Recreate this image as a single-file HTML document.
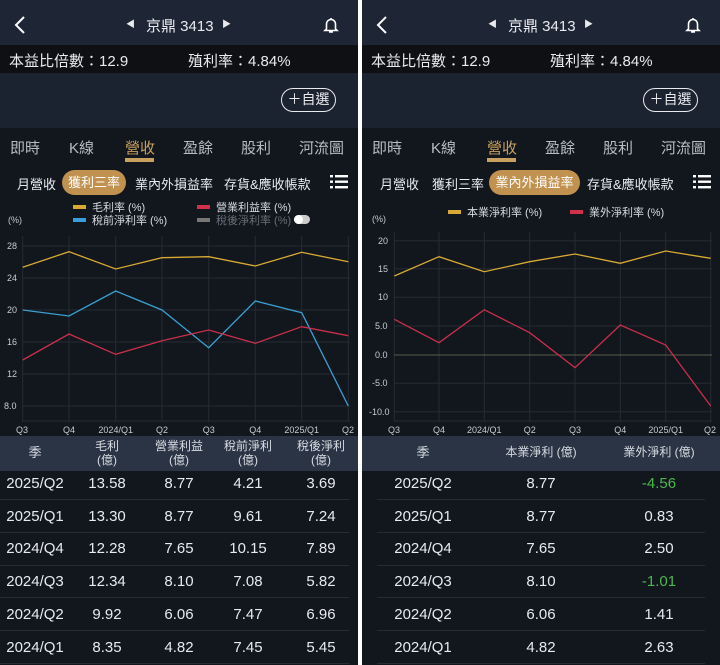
<!DOCTYPE html>
<html><head><meta charset="utf-8"><style>
*{margin:0;padding:0;box-sizing:border-box}
body{width:720px;height:665px;background:#fff;font-family:"Liberation Sans","Noto Sans CJK TC",sans-serif;color:#e8eaee;overflow:hidden;position:relative}
.p{position:absolute;top:0;width:358px;height:665px;background:#12161d;overflow:hidden}
.a{position:absolute;white-space:nowrap}
.hd{position:absolute;left:0;top:0;width:358px;height:45px;background:#1e2636}
.ib{position:absolute;left:0;top:45px;width:358px;height:28px;background:#0e1013}
.fav{position:absolute;left:0;top:73px;width:358px;height:55px;background:#1b2230}
.btn{position:absolute;left:281px;top:88px;width:55px;height:24px;border:1.3px solid #e8eaee;border-radius:12px;font-size:14px;text-align:center;line-height:21px}
.tab{font-size:15px;top:137px;color:#b8bcc4}
.sub{font-size:13px;top:174px;color:#e8eaee}
.pill{position:absolute;top:170px;height:25px;background:#c0914f;border-radius:13px;font-size:13px;color:#fff;text-align:center;line-height:25px;white-space:nowrap}
.leg{font-size:11px;color:#d8dce2}
.sw{position:absolute;width:13px;height:4px}
.th{position:absolute;left:0;top:436px;width:358px;height:35px;background:#2a3445}
.thc{font-size:12px;color:#d8dce2;text-align:center;line-height:14px;position:absolute;transform:translateX(-50%);white-space:nowrap}
.td{font-size:15px;position:absolute;transform:translateX(-50%);white-space:nowrap}
.sep{position:absolute;height:1px;background:#262c36}
</style></head><body>

<!-- LEFT PANEL -->
<div class="p" style="left:0">
<div class="hd"></div>
<svg class="a" style="left:12px;top:15px" width="16" height="20"><path d="M12 2L4 10L12 18" stroke="#fff" stroke-width="2" fill="none"/></svg>
<div class="a" style="left:126px;top:17px;font-size:9px">◀</div>
<div class="a" style="left:146px;top:15px;font-size:15px">京鼎 3413</div>
<div class="a" style="left:222px;top:17px;font-size:9px">▶</div>
<svg class="a" style="left:323px;top:16px" width="16" height="18"><path d="M8 2v1M3.5 13V8a4.5 4.5 0 0 1 9 0v5l1.5 1.5h-12z M6 16h4" stroke="#fff" stroke-width="1.6" fill="none"/></svg>
<div class="ib"></div>
<div class="a" style="left:9px;top:50px;font-size:15px">本益比倍數：12.9</div>
<div class="a" style="left:188px;top:50px;font-size:15px">殖利率：4.84%</div>
<div class="fav"></div>
<div class="btn">＋自選</div>
<div class="a tab" style="left:10px">即時</div>
<div class="a tab" style="left:69px">K線</div>
<div class="a tab" style="left:125px;color:#c8a060">營收</div>
<div class="a" style="left:125px;top:158px;width:29px;height:4px;background:#c8a060"></div>
<div class="a tab" style="left:183px">盈餘</div>
<div class="a tab" style="left:241px">股利</div>
<div class="a tab" style="left:299px">河流圖</div>
<div class="a sub" style="left:17px">月營收</div>
<div class="pill" style="left:62px;width:64px">獲利三率</div>
<div class="a sub" style="left:135px">業內外損益率</div>
<div class="a sub" style="left:224px">存貨&amp;應收帳款</div>
<svg class="a" style="left:330px;top:175px" width="18" height="14"><g fill="#fff"><rect x="0" y="0" width="3" height="2.4"/><rect x="5" y="0" width="13" height="2.4"/><rect x="0" y="5.5" width="3" height="2.4"/><rect x="5" y="5.5" width="13" height="2.4"/><rect x="0" y="11" width="3" height="2.4"/><rect x="5" y="11" width="13" height="2.4"/></g></svg>
<div class="sw" style="left:73px;top:205px;background:#d8aa35"></div><div class="a leg" style="left:92px;top:199px">毛利率 (%)</div>
<div class="sw" style="left:197px;top:205px;background:#d0304a"></div><div class="a leg" style="left:216px;top:199px">營業利益率 (%)</div>
<div class="sw" style="left:73px;top:218px;background:#3a9fd8"></div><div class="a leg" style="left:92px;top:212px">稅前淨利率 (%)</div>
<div class="sw" style="left:197px;top:218px;background:#777"></div><div class="a leg" style="left:216px;top:212px;color:#6a6e76">稅後淨利率 (%)</div>
<div class="a" style="left:294px;top:215px;width:16px;height:9px;border-radius:5px;background:#ccc"></div><div class="a" style="left:294px;top:215px;width:9px;height:9px;border-radius:5px;background:#fff"></div>
<div class="a" style="left:8px;top:215px;font-size:9px;color:#c8ccd2">(%)</div>
<svg class="a" style="left:0;top:0" width="358" height="440">
<g stroke="#262b33" stroke-width="1">
<line x1="22.7" y1="236" x2="22.7" y2="422"/><line x1="69" y1="236" x2="69" y2="422"/><line x1="115.7" y1="236" x2="115.7" y2="422"/><line x1="162" y1="236" x2="162" y2="422"/><line x1="208.7" y1="236" x2="208.7" y2="422"/><line x1="255.3" y1="236" x2="255.3" y2="422"/><line x1="301.7" y1="236" x2="301.7" y2="422"/><line x1="348.3" y1="236" x2="348.3" y2="422"/>
<line x1="22" y1="246" x2="350" y2="246"/><line x1="22" y1="278" x2="350" y2="278"/><line x1="22" y1="310" x2="350" y2="310"/><line x1="22" y1="342" x2="350" y2="342"/><line x1="22" y1="374" x2="350" y2="374"/><line x1="22" y1="406" x2="350" y2="406"/><line x1="22" y1="421" x2="350" y2="421"/>
</g>
<g font-size="9" fill="#c8ccd2" font-family="Liberation Sans">
<text x="7" y="249">28</text><text x="7" y="281">24</text><text x="7" y="313">20</text><text x="7" y="345">16</text><text x="7" y="377">12</text><text x="4" y="409">8.0</text>
<text x="22" y="433" text-anchor="middle">Q3</text><text x="69" y="433" text-anchor="middle">Q4</text><text x="115.7" y="433" text-anchor="middle">2024/Q1</text><text x="162" y="433" text-anchor="middle">Q2</text><text x="208.7" y="433" text-anchor="middle">Q3</text><text x="255.3" y="433" text-anchor="middle">Q4</text><text x="301.7" y="433" text-anchor="middle">2025/Q1</text><text x="348" y="433" text-anchor="middle">Q2</text>
</g>
<g fill="none" stroke-width="1.3">
<polyline stroke="#d8aa35" points="22.7,267.3 69,251.7 115.7,269 162,257.7 208.7,256.7 255.3,266 301.7,252.3 348.3,261.7"/>
<polyline stroke="#3a9fd0" points="22.7,310 69,316 115.7,291 162,310 208.7,347.7 255.3,301 301.7,312.7 348.3,406"/>
<polyline stroke="#c8304a" points="22.7,360 69,334 115.7,354.3 162,340.7 208.7,330 255.3,343.3 301.7,326.7 348.3,335.7"/>
</g></svg>
<div class="th"></div>
<div class="thc" style="left:35px;top:446px;font-size:13px">季</div>
<div class="thc" style="left:107px;top:439px">毛利<br>(億)</div>
<div class="thc" style="left:179px;top:439px">營業利益<br>(億)</div>
<div class="thc" style="left:248px;top:439px">稅前淨利<br>(億)</div>
<div class="thc" style="left:321px;top:439px">稅後淨利<br>(億)</div>
<div class="td" style="left:35px;top:475px">2025/Q2</div><div class="td" style="left:107px;top:475px">13.58</div><div class="td" style="left:179px;top:475px">8.77</div><div class="td" style="left:248px;top:475px">4.21</div><div class="td" style="left:321px;top:475px">3.69</div>
<div class="sep" style="left:0;width:349px;top:499px"></div>
<div class="td" style="left:35px;top:508px">2025/Q1</div><div class="td" style="left:107px;top:508px">13.30</div><div class="td" style="left:179px;top:508px">8.77</div><div class="td" style="left:248px;top:508px">9.61</div><div class="td" style="left:321px;top:508px">7.24</div>
<div class="sep" style="left:0;width:349px;top:532px"></div>
<div class="td" style="left:35px;top:540px">2024/Q4</div><div class="td" style="left:107px;top:540px">12.28</div><div class="td" style="left:179px;top:540px">7.65</div><div class="td" style="left:248px;top:540px">10.15</div><div class="td" style="left:321px;top:540px">7.89</div>
<div class="sep" style="left:0;width:349px;top:565px"></div>
<div class="td" style="left:35px;top:573px">2024/Q3</div><div class="td" style="left:107px;top:573px">12.34</div><div class="td" style="left:179px;top:573px">8.10</div><div class="td" style="left:248px;top:573px">7.08</div><div class="td" style="left:321px;top:573px">5.82</div>
<div class="sep" style="left:0;width:349px;top:597px"></div>
<div class="td" style="left:35px;top:606px">2024/Q2</div><div class="td" style="left:107px;top:606px">9.92</div><div class="td" style="left:179px;top:606px">6.06</div><div class="td" style="left:248px;top:606px">7.47</div><div class="td" style="left:321px;top:606px">6.96</div>
<div class="sep" style="left:0;width:349px;top:630px"></div>
<div class="td" style="left:35px;top:639px">2024/Q1</div><div class="td" style="left:107px;top:639px">8.35</div><div class="td" style="left:179px;top:639px">4.82</div><div class="td" style="left:248px;top:639px">7.45</div><div class="td" style="left:321px;top:639px">5.45</div>
<div class="sep" style="left:0;width:349px;top:663px"></div>
</div>

<!-- RIGHT PANEL -->
<div class="p" style="left:362px">
<div class="hd"></div>
<svg class="a" style="left:12px;top:15px" width="16" height="20"><path d="M12 2L4 10L12 18" stroke="#fff" stroke-width="2" fill="none"/></svg>
<div class="a" style="left:126px;top:17px;font-size:9px">◀</div>
<div class="a" style="left:146px;top:15px;font-size:15px">京鼎 3413</div>
<div class="a" style="left:222px;top:17px;font-size:9px">▶</div>
<svg class="a" style="left:323px;top:16px" width="16" height="18"><path d="M8 2v1M3.5 13V8a4.5 4.5 0 0 1 9 0v5l1.5 1.5h-12z M6 16h4" stroke="#fff" stroke-width="1.6" fill="none"/></svg>
<div class="ib"></div>
<div class="a" style="left:9px;top:50px;font-size:15px">本益比倍數：12.9</div>
<div class="a" style="left:188px;top:50px;font-size:15px">殖利率：4.84%</div>
<div class="fav"></div>
<div class="btn">＋自選</div>
<div class="a tab" style="left:10px">即時</div>
<div class="a tab" style="left:69px">K線</div>
<div class="a tab" style="left:125px;color:#c8a060">營收</div>
<div class="a" style="left:125px;top:158px;width:29px;height:4px;background:#c8a060"></div>
<div class="a tab" style="left:183px">盈餘</div>
<div class="a tab" style="left:241px">股利</div>
<div class="a tab" style="left:299px">河流圖</div>
<div class="a sub" style="left:18px">月營收</div>
<div class="a sub" style="left:70px">獲利三率</div>
<div class="pill" style="left:127px;width:91px">業內外損益率</div>
<div class="a sub" style="left:225px">存貨&amp;應收帳款</div>
<svg class="a" style="left:331px;top:175px" width="18" height="14"><g fill="#fff"><rect x="0" y="0" width="3" height="2.4"/><rect x="5" y="0" width="13" height="2.4"/><rect x="0" y="5.5" width="3" height="2.4"/><rect x="5" y="5.5" width="13" height="2.4"/><rect x="0" y="11" width="3" height="2.4"/><rect x="5" y="11" width="13" height="2.4"/></g></svg>
<div class="sw" style="left:86px;top:210px;background:#d8aa35"></div><div class="a leg" style="left:105px;top:204px">本業淨利率 (%)</div>
<div class="sw" style="left:208px;top:210px;background:#d0304a"></div><div class="a leg" style="left:227px;top:204px">業外淨利率 (%)</div>
<div class="a" style="left:10px;top:214px;font-size:9px;color:#c8ccd2">(%)</div>
<svg class="a" style="left:0;top:0" width="358" height="440">
<g stroke="#262b33" stroke-width="1">
<line x1="32.3" y1="232" x2="32.3" y2="422"/><line x1="77" y1="232" x2="77" y2="422"/><line x1="122.3" y1="232" x2="122.3" y2="422"/><line x1="167.7" y1="232" x2="167.7" y2="422"/><line x1="213" y1="232" x2="213" y2="422"/><line x1="258.3" y1="232" x2="258.3" y2="422"/><line x1="303.7" y1="232" x2="303.7" y2="422"/><line x1="348.7" y1="232" x2="348.7" y2="422"/>
<line x1="32" y1="240.7" x2="350" y2="240.7"/><line x1="32" y1="268.7" x2="350" y2="268.7"/><line x1="32" y1="297.3" x2="350" y2="297.3"/><line x1="32" y1="326" x2="350" y2="326"/><line x1="32" y1="383.3" x2="350" y2="383.3"/><line x1="32" y1="411.7" x2="350" y2="411.7"/><line x1="32" y1="421" x2="350" y2="421"/>
</g>
<line x1="32" y1="355" x2="350" y2="355" stroke="#5a5a4a" stroke-width="1"/>
<g font-size="9" fill="#c8ccd2" font-family="Liberation Sans">
<text x="16" y="244">20</text><text x="16" y="272">15</text><text x="16" y="300">10</text><text x="13" y="329">5.0</text><text x="13" y="358">0.0</text><text x="10" y="386">-5.0</text><text x="7" y="415">-10.0</text>
<text x="32" y="433" text-anchor="middle">Q3</text><text x="77" y="433" text-anchor="middle">Q4</text><text x="122.3" y="433" text-anchor="middle">2024/Q1</text><text x="167.7" y="433" text-anchor="middle">Q2</text><text x="213" y="433" text-anchor="middle">Q3</text><text x="258.3" y="433" text-anchor="middle">Q4</text><text x="303.7" y="433" text-anchor="middle">2025/Q1</text><text x="348" y="433" text-anchor="middle">Q2</text>
</g>
<g fill="none" stroke-width="1.3">
<polyline stroke="#d8aa35" points="32.3,276 77,256.7 122.3,271.7 167.7,261.7 213,254 258.3,263.3 303.7,251 348.7,258.3"/>
<polyline stroke="#c8304a" points="32.3,319.3 77,342.7 122.3,309.7 167.7,332.7 213,367.7 258.3,325 303.7,345 348.7,406"/>
</g></svg>
<div class="th"></div>
<div class="thc" style="left:61px;top:446px;font-size:13px">季</div>
<div class="thc" style="left:179px;top:445px;font-size:12px">本業淨利 (億)</div>
<div class="thc" style="left:297px;top:445px;font-size:12px">業外淨利 (億)</div>
<div class="td" style="left:61px;top:475px">2025/Q2</div><div class="td" style="left:179px;top:475px">8.77</div><div class="td" style="left:297px;top:475px;color:#4cb84c">-4.56</div>
<div class="sep" style="left:15px;width:328px;top:499px"></div>
<div class="td" style="left:61px;top:508px">2025/Q1</div><div class="td" style="left:179px;top:508px">8.77</div><div class="td" style="left:297px;top:508px">0.83</div>
<div class="sep" style="left:15px;width:328px;top:532px"></div>
<div class="td" style="left:61px;top:540px">2024/Q4</div><div class="td" style="left:179px;top:540px">7.65</div><div class="td" style="left:297px;top:540px">2.50</div>
<div class="sep" style="left:15px;width:328px;top:565px"></div>
<div class="td" style="left:61px;top:573px">2024/Q3</div><div class="td" style="left:179px;top:573px">8.10</div><div class="td" style="left:297px;top:573px;color:#4cb84c">-1.01</div>
<div class="sep" style="left:15px;width:328px;top:597px"></div>
<div class="td" style="left:61px;top:606px">2024/Q2</div><div class="td" style="left:179px;top:606px">6.06</div><div class="td" style="left:297px;top:606px">1.41</div>
<div class="sep" style="left:15px;width:328px;top:630px"></div>
<div class="td" style="left:61px;top:639px">2024/Q1</div><div class="td" style="left:179px;top:639px">4.82</div><div class="td" style="left:297px;top:639px">2.63</div>
<div class="sep" style="left:15px;width:328px;top:663px"></div>
</div>
</body></html>
